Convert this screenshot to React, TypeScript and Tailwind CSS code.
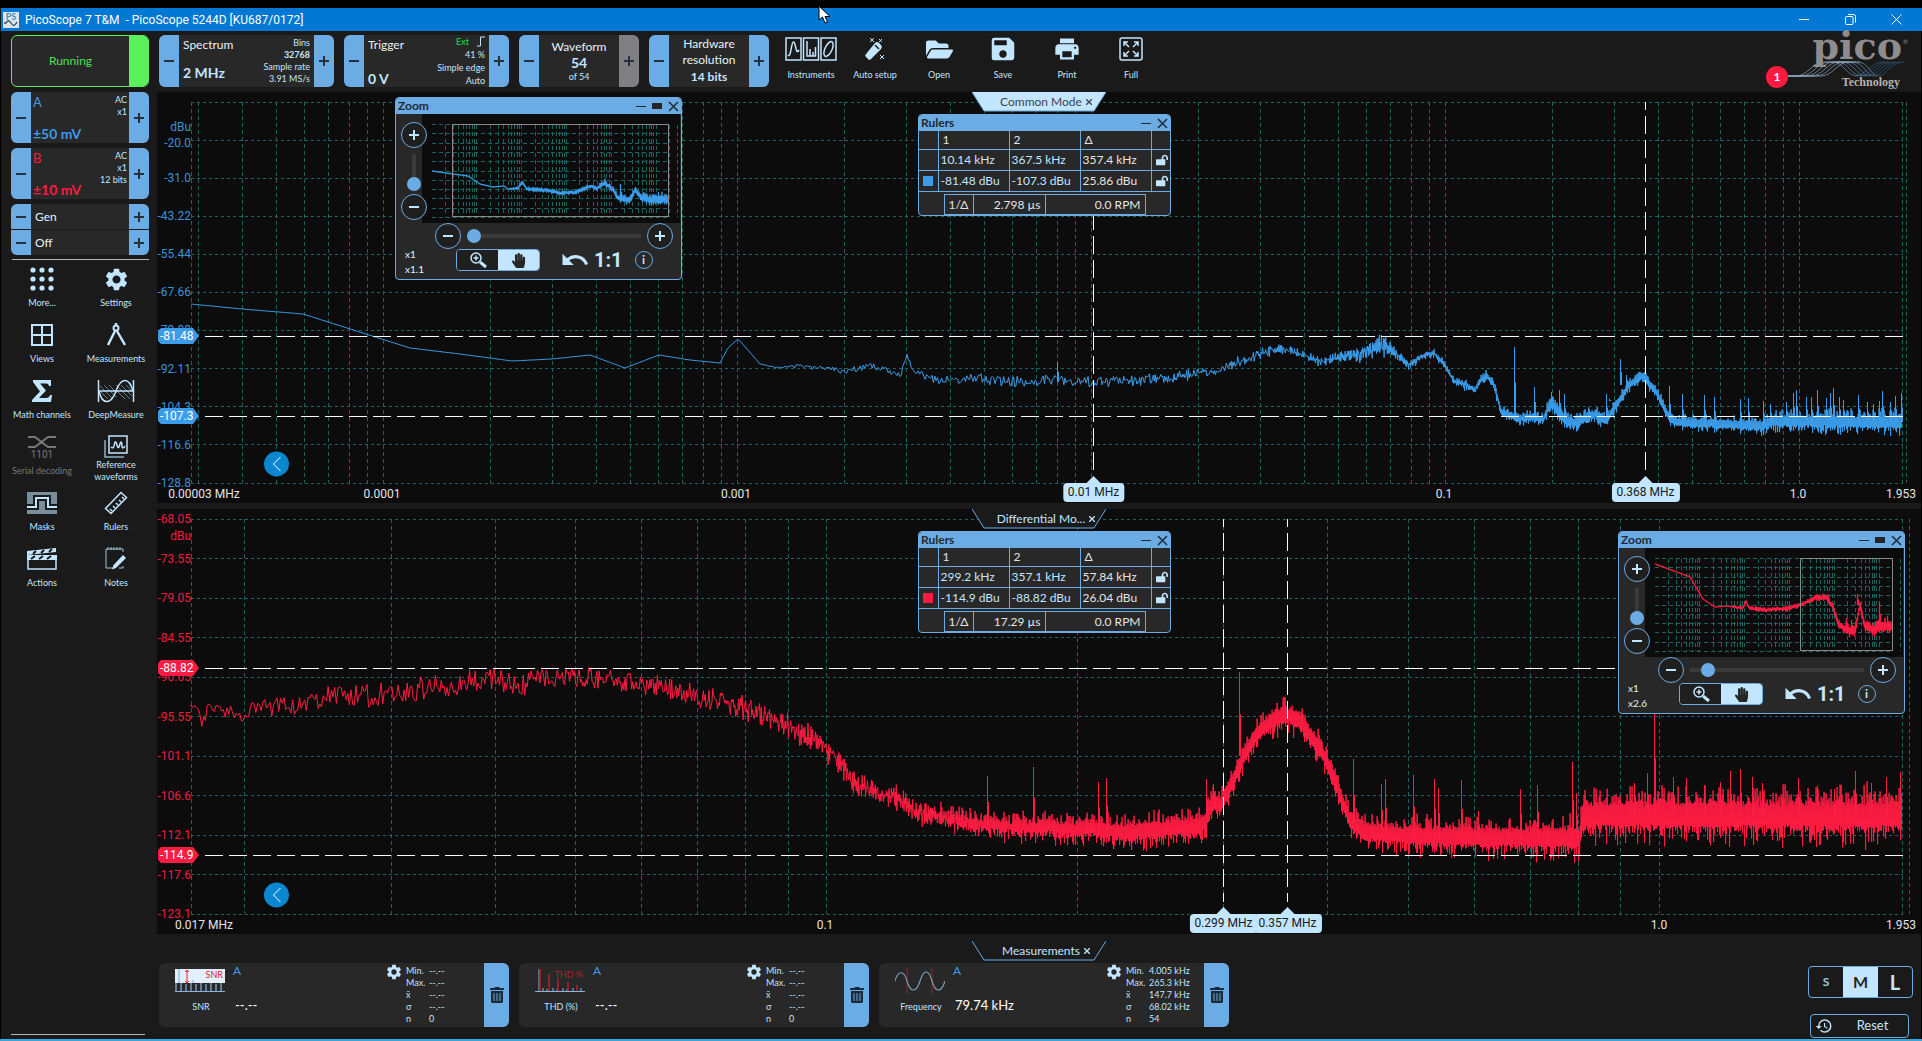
import type { ReactNode } from "react";
import { FaFolderOpen, FaHandPaper, FaLockOpen, FaTrashAlt } from "react-icons/fa";
import { MdHistory, MdPrint, MdSave, MdSettings, MdUndo } from "react-icons/md";

type Point = [number, number, number];
type Spike = [number, number];
type Label = { text: string; at: number };

const LOGS = [1, 2, 3, 4, 5, 6, 7, 8, 9].map((n) => Math.log10(n));

// small seeded generator so that the noise floor is the same on each render
const makeRandom = (seed: number) => () => {
  seed = (seed * 1664525 + 1013904223) % 4294967296;
  return seed / 4294967296;
};

// x, centre y, noise amplitude
const commonTrace: Point[] = [
  [191, 304, 0], [242, 309, 0], [303, 314, 0], [410, 348, 0], [460, 354, 0], [512, 361, 0], [552, 359, 0],
  [590, 355, 0], [625, 368, 0], [659, 355, 0], [690, 360, 0], [720, 363, 0], [728, 348, 0], [738, 339, 0], [748, 350, 0],
  [760, 364, 0], [778, 368, 1], [800, 366, 2], [846, 371, 3], [870, 366, 3], [901, 374, 3], [907, 356, 2],
  [913, 371, 3], [938, 381, 4], [975, 378, 5], [1010, 382, 6], [1050, 380, 5], [1091, 382, 6], [1131, 381, 6],
  [1163, 378, 6], [1189, 375, 6], [1220, 370, 6], [1241, 361, 6], [1262, 353, 6], [1281, 349, 6],
  [1299, 352, 6], [1320, 362, 6], [1338, 357, 7], [1362, 354, 8], [1375, 347, 13], [1386, 345, 14], [1396, 354, 7],
  [1409, 365, 6], [1420, 357, 5], [1433, 353, 5], [1443, 363, 5], [1454, 381, 5], [1464, 384, 6],
  [1475, 390, 5], [1481, 380, 6], [1486, 376, 7], [1493, 382, 6], [1501, 412, 7], [1517, 418, 8], [1535, 417, 9],
  [1543, 420, 7], [1551, 402, 11], [1561, 416, 9], [1574, 423, 9], [1595, 414, 9], [1606, 421, 8],
  [1619, 401, 7], [1629, 385, 8], [1642, 376, 7], [1655, 390, 7], [1668, 415, 8], [1677, 422, 8],
  [1745, 425, 9], [1763, 426, 10], [1771, 421, 11], [1902, 422, 13],
];

const commonSpikes: Spike[] = [
  [1057, 362], [1514, 347], [1534, 387], [1551, 392], [1559, 390], [1564, 394], [1588, 407], [1606, 394], [1609, 399],
  [1620, 359], [1626, 375], [1669, 386], [1682, 394], [1704, 395], [1714, 397], [1740, 399], [1748, 398],
  [1763, 401], [1770, 404], [1786, 402], [1793, 393], [1796, 390], [1806, 397], [1811, 397], [1817, 390], [1826, 398],
  [1830, 393], [1833, 388], [1839, 397], [1843, 400], [1858, 395], [1867, 402], [1873, 404], [1879, 401], [1882, 391],
  [1890, 402], [1895, 396], [1901, 393],
];

const diffTrace: Point[] = [
  [191, 707, 4], [201, 718, 10], [208, 709, 8], [224, 714, 8], [244, 711, 10], [265, 708, 10], [293, 706, 9], [322, 698, 11],
  [351, 696, 12], [380, 694, 13], [408, 691, 12], [437, 686, 11], [465, 683, 12], [483, 678, 11], [523, 683, 13],
  [552, 681, 12], [580, 677, 11], [609, 680, 12], [638, 683, 12], [666, 688, 13], [695, 696, 13], [724, 701, 14],
  [747, 710, 14], [770, 717, 14], [793, 730, 15], [816, 740, 15], [827, 751, 14], [841, 764, 14], [850, 780, 14],
  [867, 790, 14], [896, 796, 14], [913, 810, 15], [942, 818, 16], [976, 822, 17], [1011, 828, 18],
  [1050, 828, 18], [1059, 831, 17], [1090, 828, 17], [1123, 833, 18], [1147, 830, 18], [1194, 827, 17], [1206, 821, 17],
  [1213, 802, 17], [1220, 806, 16], [1232, 783, 16], [1244, 756, 15], [1255, 737, 16], [1270, 722, 17], [1285, 714, 18],
  [1300, 721, 17], [1311, 737, 16], [1323, 754, 16], [1335, 780, 15], [1341, 798, 14], [1350, 820, 16],
  [1364, 831, 18], [1411, 836, 20], [1500, 838, 20], [1580, 838, 21], [1583, 815, 27], [1902, 816, 30],
];

const diffSpikes: Spike[] = [
  [987, 776], [1033, 767], [1098, 782], [1106, 778], [1206, 779], [1213, 784], [1239, 672], [1353, 759], [1381, 784],
  [1385, 779], [1413, 775], [1434, 779], [1438, 788], [1461, 780], [1478, 811], [1520, 789], [1537, 785], [1572, 762],
  [1576, 793], [1634, 783], [1647, 773], [1654, 700], [1673, 777], [1686, 778], [1704, 785], [1720, 782], [1730, 771],
  [1740, 769], [1752, 777], [1762, 783], [1798, 778], [1817, 786], [1834, 789], [1855, 771], [1871, 783], [1886, 777],
  [1900, 772],
];

const miniCommon: Point[] = [
  [10, 57, 0], [31, 60, 0], [46, 62, 0], [58, 70, 0], [71, 73, 0], [82, 72, 0], [86, 75, 0], [96, 74, 1], [100, 68, 1],
  [105, 75, 1], [121, 76, 2], [138, 79, 2], [155, 78, 2], [168, 72, 2], [175, 74, 3], [183, 69, 4], [191, 76, 4],
  [196, 84, 4], [208, 86, 5], [213, 76, 4], [220, 84, 6], [230, 86, 6], [246, 85, 8],
];

const miniDiff: Point[] = [
  [10, 16, 0], [32, 24, 0], [45, 29, 0], [58, 51, 0], [70, 59, 0], [82, 58, 0], [98, 60, 1], [101, 53, 1], [104, 60, 1],
  [122, 62, 2], [145, 60, 3], [158, 56, 3], [172, 49, 4], [182, 50, 4], [188, 59, 5], [193, 76, 5], [202, 82, 6],
  [210, 83, 7], [215, 57, 6], [220, 79, 6], [230, 82, 8], [234, 78, 8], [247, 79, 9],
];

const clamp = (n: number) => Math.min(1, Math.max(0, n));

function buildTrace(points: Point[], spikes: Spike[], seed: number, dense: number) {
  const random = makeRandom(seed);
  const [first] = points;
  const last = points[points.length - 1];
  const out = [`M${first[0]} ${first[1]}`];
  let index = 0;
  let side = 1;
  let x = first[0];
  while (x < last[0]) {
    while (index < points.length - 2 && x >= points[index + 1][0]) index++;
    const [x0, y0, a0] = points[index];
    const [x1, y1, a1] = points[index + 1];
    const t = (x - x0) / (x1 - x0);
    const amp = a0 + (a1 - a0) * t;
    const mid = y0 + (y1 - y0) * t;
    const packed = clamp((x - dense) / 600);
    side = -side;
    const jag = random();
    const spread = side * (0.3 + 0.2 * random() + 0.7 * jag * jag * jag);
    const noise = (1 - packed) * (random() * 2 - 1) + packed * spread;
    out.push(`L${x.toFixed(1)} ${(mid + noise * amp).toFixed(1)}`);
    x += 1.8 - 1.3 * clamp((x - dense + 300) / 700);
  }
  spikes.forEach(([sx, sy]) => {
    const next = points[points.findIndex((point) => point[0] >= sx)] ?? last;
    out.push(`M${sx + 0.5} ${sy}V${next[1]}M${sx + 1.5} ${(sy + next[1]) / 2}V${next[1]}`);
  });
  return out.join("");
}

function gridPath(start: number, decade: number, left: number, right: number, top: number, bottom: number) {
  let d = "";
  for (let base = start - decade; base < right; base += decade) {
    LOGS.forEach((log) => {
      const x = Math.floor(base + log * decade) + 0.5;
      if (x > left + 2 && x < right) d += `M${x} ${top}V${bottom}`;
    });
  }
  return d;
}

const Stepper = ({ sign, muted }: { sign: "+" | "−"; muted?: boolean }) => (
  <button
    aria-label={sign === "+" ? "Increase" : "Decrease"}
    className={`flex w-5 shrink-0 items-center justify-center self-stretch ${muted ? "bg-[#808084]" : "bg-[#6bace4]"}`}
  >
    <svg width="12" height="12" viewBox="0 0 12 12" stroke="#24303c" strokeWidth="2">
      <path d={sign === "+" ? "M1 6H11M6 1V11" : "M1 6H11"} />
    </svg>
  </button>
);

const Control = ({ width, muted, children }: { width: string; muted?: boolean; children: ReactNode }) => (
  <div className={`flex h-[52px] overflow-hidden rounded-md bg-[#282828] ${width}`}>
    <Stepper sign="−" />
    <div className="min-w-0 flex-1">{children}</div>
    <Stepper sign="+" muted={muted} />
  </div>
);

const ToolButton = ({ label, icon }: { label: string; icon: ReactNode }) => (
  <button className="flex w-16 flex-col items-center text-[9px] text-[#c2e6ff]">
    <span className="flex h-6 items-center justify-center">{icon}</span>
    <span className="mt-2 h-3 leading-3 whitespace-nowrap">{label}</span>
  </button>
);

const SideButton = ({ label, icon, disabled }: { label: string; icon: ReactNode; disabled?: boolean }) => (
  <button
    disabled={disabled}
    className={`flex h-14 flex-col items-center text-[9px] ${disabled ? "text-[#77777a]" : "text-[#c2e6ff]"}`}
  >
    <span className="flex h-6 items-center justify-center">{icon}</span>
    <span className="flex h-6 w-20 items-center justify-center text-center leading-3">{label}</span>
  </button>
);

const InstrumentsIcon = () => (
  <svg width="52" height="24" viewBox="0 0 52 24" fill="none" stroke="#c2e6ff" strokeWidth="1.5">
    <path d="M1 1H16V23H1ZM18.500 1H33.500V23H18.500ZM36 1H51V23H36Z" />
    <path d="M3 18C6 22 6 5 8.500 5S10.500 19 14 13" />
    <path d="M22 4V19H31M25 19V12M28 19V15M30.500 19V10" />
    <ellipse cx="43.500" cy="12" rx="3.500" ry="8" transform="rotate(25 43.500 12)" />
  </svg>
);

const AutoSetupIcon = () => (
  <svg width="24" height="24" viewBox="0 0 24 24">
    <path d="M3 17 12 6a3 3 0 0 1 4 0l2 2a3 3 0 0 1 0 4L8 22a2 2 0 0 1-3 0l-2-2a2 2 0 0 1 0-3Z" fill="#c2e6ff" />
    <path d="M12 8 16 12" stroke="#1a1a1a" strokeWidth="1.5" />
    <path d="M7 1 11 5M11 1 7 5M17 18 21 22M21 18 17 22M16 2 19 5M19 2 16 5" stroke="#c2e6ff" />
  </svg>
);

const FullIcon = () => (
  <svg width="24" height="24" viewBox="0 0 24 24" fill="none" stroke="#c2e6ff" strokeWidth="1.500">
    <rect x="1" y="1" width="22" height="22" rx="2" />
    <path d="M5 9V5H9M5 5 10 10M15 5H19V9M19 5 14 10M5 15V19H9M5 19 10 14M19 15V19H15M19 19 14 14" />
  </svg>
);

const MoreIcon = () => (
  <svg width="24" height="24" viewBox="0 0 24 24" fill="#c2e6ff">
    {[3, 12, 21].map((y) => [3, 12, 21].map((x) => <circle key={`${x}-${y}`} cx={x} cy={y} r="2.600" />))}
  </svg>
);

const ViewsIcon = () => (
  <svg width="24" height="24" viewBox="0 0 24 24" fill="none" stroke="#c2e6ff" strokeWidth="2">
    <path d="M2 2H22V22H2ZM12 2V22M2 12H22" />
  </svg>
);

const MeasureIcon = () => (
  <svg width="24" height="24" viewBox="0 0 24 24" fill="none" stroke="#c2e6ff" strokeWidth="2">
    <circle cx="12" cy="5" r="2.500" />
    <path d="M12 0V2M11 8 4 22M13 8 21 22" strokeWidth="2.500" />
  </svg>
);

const MathIcon = () => (
  <svg width="24" height="24" viewBox="0 0 24 24" fill="#c2e6ff">
    <path d="M3 1H21V7H19C18.500 5 17.500 4.500 15 4.500H10L16 11.500 9 19H16C18.500 19 19.500 18 20 16H22L21 23H2V21L10 12.500 3 3Z" />
  </svg>
);

const DeepMeasureIcon = () => (
  <svg width="38" height="24" viewBox="0 0 38 24" fill="none" stroke="#c2e6ff">
    <path d="M3 7 16 20M3 12 11 20M7 6 19 18M12 6 20 14M19 6 33 20M24 6 35 17M29 6 35 12M20 12 28 20" stroke="#8296a3" strokeWidth=".8" />
    <path d="M1.500 1V23M36.500 1V23M1 12H37" strokeWidth="1.500" />
    <path d="M2 12C5 26 14 26 19 12S32-2 36 12" strokeWidth="1.500" />
  </svg>
);

const SerialIcon = () => (
  <svg width="30" height="26" viewBox="0 0 30 26" fill="none">
    <path d="M1 3H8L21 13H29M1 13H8L21 3H29" stroke="#77777a" strokeWidth="2" />
    <text x="15" y="24" fill="#77777a" fontSize="10" fontFamily="Roboto, sans-serif" textAnchor="middle">1101</text>
  </svg>
);

const ReferenceIcon = () => (
  <svg width="24" height="24" viewBox="0 0 24 24" fill="none" stroke="#c2e6ff" strokeWidth="1.500">
    <path d="M5 1H23V18H5Z" />
    <path d="M1 5V22H20" stroke="#8fb0c6" />
    <path d="M7 12C9 14 10 12 10.500 9S12 6 13 10 15 13 16 9 18 8 18 11 20 13 21 11" />
  </svg>
);

const MasksIcon = () => (
  <svg width="30" height="22" viewBox="0 0 30 22">
    <rect width="30" height="22" fill="#7a8d9a" />
    <path d="M0 15H9V6H21V15H30" fill="none" stroke="#1a1a1a" strokeWidth="6" />
    <path d="M0 15H9V6H21V15H30" fill="none" stroke="#c2e6ff" strokeWidth="2" />
  </svg>
);

const RulersIcon = () => (
  <svg width="24" height="24" viewBox="0 0 24 24" fill="none" stroke="#c2e6ff" strokeWidth="1.500">
    <path d="M17 1.500 22.500 6.500 7 22.500 1.500 17.500Z" />
    <path d="M8 20 6 18M11 17 9 15M14 14 12 12M17 11 15 9M20 8 18 6" />
  </svg>
);

const ActionsIcon = () => (
  <svg width="30" height="24" viewBox="0 0 30 24">
    <path d="M1 9V22H29V9" fill="none" stroke="#c2e6ff" strokeWidth="1.500" />
    <path d="M0 4 29 1V5L0 8ZM0 8H30V13H0Z" fill="#c2e6ff" />
    <path d="M6 7 9 4M14 6 17 3M22 5 25 2M4 12 8 9M12 12 16 9M20 12 24 9" stroke="#1a1a1a" strokeWidth="2" />
  </svg>
);

const NotesIcon = () => (
  <svg width="24" height="24" viewBox="0 0 24 24" fill="none" stroke="#9fc3da">
    <path d="M19 5V2H2V21H9M19 19V21H15" />
    <path d="M4 0V3M7 0V3M10 0V3M13 0V3M16 0V3" />
    <path d="M19 8 22 11 12 21 8 22.500 9.500 18Z" fill="#c2e6ff" stroke="none" />
  </svg>
);

const Channel = ({ name, range, notes, color }: { name: string; range: string; notes: string[]; color: string }) => (
  <div className="mt-[5px] flex h-[51px] overflow-hidden rounded-md bg-[#282828]">
    <Stepper sign="−" />
    <div className={`flex flex-1 flex-col justify-between pt-0.5 pl-0.5 ${color}`}>
      <span className="text-[13px] leading-4">{name}</span>
      <span className="text-[14px] leading-[18px] font-bold whitespace-nowrap">{range}</span>
    </div>
    <div className="-ml-6 flex flex-col pt-0.5 pr-0.5 text-right text-[9px] leading-3 whitespace-nowrap text-[#c2e6ff]">
      {notes.map((note) => (
        <span key={note}>{note}</span>
      ))}
    </div>
    <Stepper sign="+" />
  </div>
);

const ToolSide = () => (
  <aside className="flex w-[157px] shrink-0 flex-col border-l border-black pt-1 pr-2 pb-1 pl-[10px]">
    <button className="flex h-[52px] shrink-0 overflow-hidden rounded-md border border-[#5bf05b] bg-[#282828]">
      <span className="flex-1 self-center text-[12px] text-[#4fe04f]">Running</span>
      <span className="w-[19px] self-stretch bg-[#5bf05b]" />
    </button>
    <Channel name="A" range="±50 mV" notes={["AC", "x1"]} color="text-[#3b9aea]" />
    <Channel name="B" range="±10 mV" notes={["AC", "x1", "12 bits"]} color="text-[#ff1a40]" />
    <div className="mt-[5px] flex flex-col gap-px overflow-hidden rounded-md">
      {["Gen", "Off"].map((text) => (
        <div key={text} className="flex h-[25px] items-center bg-[#282828]">
          <Stepper sign="−" />
          <span className="flex-1 pl-1 text-[12px] text-[#e4f2fc]">{text}</span>
          <Stepper sign="+" />
        </div>
      ))}
    </div>
    <hr className="mt-1 ml-px border-[#b5b5b5]" />
    <nav className="-mx-1 mt-[7px] -ml-[6px] grid grid-cols-2">
      <SideButton label="More..." icon={<MoreIcon />} />
      <SideButton label="Settings" icon={<MdSettings size={27} />} />
      <SideButton label="Views" icon={<ViewsIcon />} />
      <SideButton label="Measurements" icon={<MeasureIcon />} />
      <SideButton label="Math channels" icon={<MathIcon />} />
      <SideButton label="DeepMeasure" icon={<DeepMeasureIcon />} />
      <SideButton label="Serial decoding" icon={<SerialIcon />} disabled />
      <SideButton label="Reference waveforms" icon={<ReferenceIcon />} />
      <SideButton label="Masks" icon={<MasksIcon />} />
      <SideButton label="Rulers" icon={<RulersIcon />} />
      <SideButton label="Actions" icon={<ActionsIcon />} />
      <SideButton label="Notes" icon={<NotesIcon />} />
    </nav>
    <hr className="mt-auto mr-1 border-[#b5b5b5]" />
  </aside>
);

const Toolbar = () => (
  <header className="flex h-[61px] shrink-0 items-start pt-1 pl-0.5 text-[#e4f2fc]">
    <div className="flex gap-[10px]">
      <Control width="w-[175px]">
        <div className="flex h-full justify-between px-1">
          <div className="flex flex-col justify-between py-1">
            <span className="text-[12px] leading-3">Spectrum</span>
            <span className="text-[14px] leading-5 font-bold text-[#c2e6ff]">2 MHz</span>
          </div>
          <div className="flex flex-col pt-0.5 text-right text-[9px] leading-3 text-[#c2e6ff]">
            <span>Bins</span>
            <span className="font-bold">32768</span>
            <span>Sample rate</span>
            <span>3.91 MS/s</span>
          </div>
        </div>
      </Control>
      <Control width="w-[165px]">
        <div className="flex h-full justify-between px-1">
          <div className="flex flex-col justify-between pt-0.5">
            <span className="text-[12px] leading-4">Trigger</span>
            <span className="text-[14px] leading-4 font-bold text-[#c2e6ff]">0 V</span>
          </div>
          <div className="flex flex-col text-right text-[9px] leading-[13px] text-[#c2e6ff]">
            <span className="flex items-center justify-end gap-2 text-[#14e050]">
              Ext
              <svg width="8" height="11" viewBox="0 0 8 11" fill="none" stroke="#c2e6ff">
                <path d="M0 10H3.500V1H8" />
              </svg>
            </span>
            <span>41 %</span>
            <span>Simple edge</span>
            <span>Auto</span>
          </div>
        </div>
      </Control>
      <Control width="w-[120px]" muted>
        <div className="flex h-full flex-col items-center justify-between py-1">
          <span className="text-[12px] leading-4">Waveform</span>
          <span className="text-[14px] leading-4 font-bold text-[#c2e6ff]">54</span>
          <span className="text-[9px] leading-3 text-[#c2e6ff]">of 54</span>
        </div>
      </Control>
      <Control width="w-[120px]">
        <div className="flex h-full flex-col items-center pt-px text-center">
          <span className="text-[12px] leading-4">Hardware resolution</span>
          <span className="text-[12px] leading-[18px] font-bold text-[#c2e6ff]">14 bits</span>
        </div>
      </Control>
    </div>
    <div className="ml-[10px] flex pt-0.5">
      <ToolButton label="Instruments" icon={<InstrumentsIcon />} />
      <ToolButton label="Auto setup" icon={<AutoSetupIcon />} />
      <ToolButton label="Open" icon={<FaFolderOpen size={27} />} />
      <ToolButton label="Save" icon={<MdSave size={30} />} />
      <ToolButton label="Print" icon={<MdPrint size={28} />} />
      <ToolButton label="Full" icon={<FullIcon />} />
    </div>
    <div className="relative mr-[11px] ml-auto h-[53px] w-[144px] text-[#8f8c8e]">
      <svg className="absolute top-0 left-0" width="144" height="53" viewBox="0 0 144 53" fill="none">
        {[0, 1, 2, 3, 4, 5].map((i) => (
          <g key={i}>
            <path d={`M22 41H${30 + i * 5}C${42 + i * 5} 41 ${46 + i * 5} 27 ${58 + i * 5} 27H${74 + i * 4}`} stroke="#8fa5c0" strokeWidth=".7" />
            <path d={`M${66 + i * 5} 27C${78 + i * 5} 27 ${80 + i * 5} 41 ${92 + i * 4} 41`} stroke="#6f8fb4" strokeWidth=".7" />
            <path d={`M${88 + i * 5} 41C${100 + i * 4} 41 ${104 + i * 4} 27 ${118 + i * 4} 27`} stroke="#2b4e6c" strokeWidth=".8" />
          </g>
        ))}
      </svg>
      <span className="absolute -top-2 right-2 font-['DejaVu_Serif',serif] text-[38px] leading-[38px] font-bold">pico</span>
      <span className="absolute top-1 right-0.5 text-[6px] leading-[6px]">®</span>
      <span className="absolute right-2.5 -bottom-px font-['Liberation_Serif',serif] text-[12px] leading-[14px] font-bold text-[#b4b2b4]">
        Technology
      </span>
      <span className="absolute bottom-0 left-0 flex size-[22px] items-center justify-center rounded-full bg-[#ff1a40] text-[12px] font-bold text-white">
        1
      </span>
    </div>
  </header>
);

const Tab = ({ label, active }: { label: string; active?: boolean }) => (
  <div className="relative flex h-5 w-[134px] items-center justify-center">
    <svg className="absolute inset-0" width="134" height="20" viewBox="0 0 134 20">
      <path d="M0 0 12 19H122L134 0" fill={active ? "#c2e6ff" : "#1a1a1a"} stroke="#6bace4" />
    </svg>
    <span
      className={`relative flex items-center gap-0.5 pl-4 text-[12px] leading-4 whitespace-nowrap ${active ? "text-[#3a4450]" : "text-[#c2e6ff]"}`}
    >
      {label}
      <button aria-label={`Close ${label}`} className="p-0.5">
        <svg width="6" height="6" viewBox="0 0 6 6" stroke="currentColor" strokeWidth="1.300">
          <path d="M0 0 6 6M6 0 0 6" />
        </svg>
      </button>
    </span>
  </div>
);

const WindowBar = ({ title, max }: { title: string; max?: boolean }) => (
  <div className="flex h-4 items-center bg-[#6bace4] pr-0.5 pl-0.5 text-[#1f2a35]">
    <span className="mr-auto text-[12px] leading-4 font-bold">{title}</span>
    <button aria-label="Minimize" className="px-1.5">
      <svg width="10" height="10" viewBox="0 0 10 10" stroke="currentColor">
        <path d="M0 5.500H10" />
      </svg>
    </button>
    {max && <button aria-label="Maximize" className="mr-1.5 h-1.5 w-2.5 bg-[#262626]" />}
    <button aria-label="Close">
      <svg width="11" height="11" viewBox="0 0 11 11" stroke="currentColor" strokeWidth="1.500">
        <path d="M1 1 10 10M10 1 1 10" />
      </svg>
    </button>
  </div>
);

const RoundButton = ({ sign }: { sign: "+" | "−" }) => (
  <button
    aria-label={sign === "+" ? "Zoom in" : "Zoom out"}
    className="flex size-[26px] shrink-0 items-center justify-center rounded-full border border-[#6bace4] bg-[#1f1f1f]"
  >
    <svg width="10" height="10" viewBox="0 0 10 10" stroke="#c2e6ff" strokeWidth="2">
      <path d={sign === "+" ? "M0 5H10M5 0V10" : "M0 5H10"} />
    </svg>
  </button>
);

type ZoomProps = { trace: Point[]; color: string; spikes: Spike[]; from: number; to: number; value: number; factor: string };

const ZoomWindow = ({ trace, color, spikes, from, to, value, factor }: ZoomProps) => (
  <section className="h-[183px] w-[287px] overflow-hidden rounded border border-[#6bace4] bg-[#282828]">
    <WindowBar title="Zoom" max />
    <div className="flex">
      <div className="z-10 flex w-9 shrink-0 flex-col items-center pt-2">
        <RoundButton sign="+" />
        <input
          type="range"
          aria-label="Vertical zoom"
          defaultValue={0}
          className="mt-1.5 mb-[3px] h-[37px] w-3.5 appearance-none bg-transparent [direction:rtl] [writing-mode:vertical-lr] [&::-webkit-slider-runnable-track]:w-1 [&::-webkit-slider-runnable-track]:bg-[#3a3a3a] [&::-webkit-slider-thumb]:-ml-[5px] [&::-webkit-slider-thumb]:size-3.5 [&::-webkit-slider-thumb]:appearance-none [&::-webkit-slider-thumb]:rounded-full [&::-webkit-slider-thumb]:bg-[#6bace4]"
        />
        <RoundButton sign="−" />
      </div>
      <svg width="258" height="109" viewBox="0 0 258 109" fill="none" className="-ml-2.5 shrink-0 bg-[#0c0c0c]">
        <path d={gridPath(10, 44.8, 9, 257, 11, 103)} stroke="#1c6461" strokeDasharray="4 3" />
        <path
          d={[0, 1, 2, 3, 4, 5, 6, 7, 8, 9, 10].map((i) => `M10 ${Math.round(10 + i * 9.3) + 0.5}H248`).join("")}
          stroke="#1c6461"
          strokeDasharray="4 3"
        />
        <path d={buildTrace(trace, spikes, 7, -700)} stroke={color} strokeWidth="1.300" />
        <rect x={from + 0.5} y="10.500" width={to - from} height="92" stroke="#8a8a8a" />
      </svg>
    </div>
    <div className="flex h-[26px] items-center pl-[39px]">
      <RoundButton sign="−" />
      <input
        type="range"
        aria-label="Horizontal zoom"
        defaultValue={value}
        className="mx-1.5 h-3.5 w-[174px] appearance-none bg-transparent [&::-webkit-slider-runnable-track]:h-1 [&::-webkit-slider-runnable-track]:bg-[#3a3a3a] [&::-webkit-slider-thumb]:-mt-[5px] [&::-webkit-slider-thumb]:size-3.5 [&::-webkit-slider-thumb]:appearance-none [&::-webkit-slider-thumb]:rounded-full [&::-webkit-slider-thumb]:bg-[#6bace4]"
      />
      <RoundButton sign="+" />
    </div>
    <div className="flex items-start pl-[9px] text-[#c2e6ff]">
      <div className="-mt-0.5 w-[51px] text-[10px] leading-[15px] text-[#e4f2fc]">
        <div>x1</div>
        <div>{factor}</div>
      </div>
      <div className="flex h-[22px] w-[84px] overflow-hidden rounded border border-[#6bace4]">
        <button aria-label="Zoom tool" className="flex flex-1 items-center justify-center bg-[#1f1f1f]">
          <svg width="18" height="18" viewBox="0 0 18 18" fill="none" stroke="#c2e6ff" strokeWidth="1.500">
            <circle cx="7" cy="7" r="5" />
            <path d="M4.500 7H9.500M7 4.500V9.500" />
            <path d="M11 11 17 16" strokeWidth="3" />
          </svg>
        </button>
        <button aria-label="Hand tool" className="flex flex-1 items-center justify-center bg-[#c2e6ff] text-[#262626]">
          <FaHandPaper size={15} />
        </button>
      </div>
      <button aria-label="Undo zoom" className="ml-5 flex h-[22px] items-center">
        <MdUndo size={30} />
      </button>
      <button className="ml-1 h-[22px] text-[20px] leading-[22px] font-bold font-[family-name:Roboto]">1:1</button>
      <button
        aria-label="Zoom information"
        className="mt-0.5 ml-3 flex size-[18px] items-center justify-center rounded-full border border-[#6bace4] text-[12px] leading-3 font-bold"
      >
        i
      </button>
    </div>
  </section>
);

type RulerProps = { rows: string[][]; swatch: string; period: string };

const RulersWindow = ({ rows, swatch, period }: RulerProps) => (
  <section className="h-[102px] w-[253px] overflow-hidden rounded border border-[#6bace4] bg-[#282828] text-[12px] text-[#e4e4e4]">
    <WindowBar title="Rulers" />
    <table className="w-full table-fixed border-collapse text-left leading-4 [&_td]:border-[#6bace4] [&_th]:border-[#6bace4]">
      <colgroup>
        <col className="w-[19px]" />
        <col />
        <col />
        <col />
        <col className="w-[19px]" />
      </colgroup>
      <thead>
        <tr className="h-[18px]">
          <th className="border-r border-b" />
          {["1", "2", "Δ"].map((head) => (
            <th key={head} className="border-r border-b px-1 font-normal">
              {head}
            </th>
          ))}
          <th className="border-b" />
        </tr>
      </thead>
      <tbody>
        {rows.map((row, i) => (
          <tr key={row[0]} className="h-[21px]">
            <td className="border-r border-b">
              {i === 1 && <span className={`mx-auto block size-2.5 ${swatch}`} />}
            </td>
            {row.map((cell, j) => (
              <td key={cell} className={`border-r border-b px-0.5 whitespace-nowrap ${j < 2 ? "text-[#c2e6ff]" : ""}`}>
                {cell}
              </td>
            ))}
            <td className="border-b text-[#c2e6ff]">
              <button aria-label="Unlock rulers" className="block pl-1">
                <FaLockOpen size={12} />
              </button>
            </td>
          </tr>
        ))}
      </tbody>
    </table>
    <dl className="mx-auto mt-0.5 flex h-[21px] w-[202px] items-center border border-[#6bace4] leading-[19px]">
      <dt className="w-[29px] border-r border-[#6bace4] text-center">1/Δ</dt>
      <dd className="w-[72px] border-r border-[#6bace4] pr-1 text-right">{period}</dd>
      <dd className="flex-1 pr-1 text-right">0.0 RPM</dd>
    </dl>
  </section>
);

type ChartProps = {
  name: string;
  top: number;
  height: number;
  plotTop: number;
  plotBottom: number;
  color: string;
  tone: string;
  tagTone: string;
  grid: string;
  path: string;
  unitAt: number;
  yLabels: Label[];
  xLabels: Label[];
  hRulers: Label[];
  vRulers: Label[];
  className: string;
  children: ReactNode;
};

const LEFT = 157;
const WIDTH = 1764;

const Chart = (props: ChartProps) => {
  const { top, height, plotTop, plotBottom, color, tone } = props;
  const px = (x: number) => `${((x - LEFT) / WIDTH) * 100}%`;
  const py = (y: number) => `${((y - top) / height) * 100}%`;
  const step = (plotBottom - plotTop) / 10;
  const rows = Array.from({ length: 11 }, (_, i) => `M191 ${Math.floor(plotTop + i * step) + 0.5}H1903`).join("");

  return (
    <section
      aria-label={props.name}
      className={`relative min-h-0 bg-[#0c0c0c] text-[12px] font-[family-name:Roboto] ${props.className}`}
    >
      <svg
        className="absolute inset-0 size-full"
        viewBox={`${LEFT} ${top} ${WIDTH} ${height}`}
        preserveAspectRatio="none"
        fill="none"
      >
        <path d={rows} stroke="#1c6461" strokeDasharray="3 3" />
        <path
          d={`${props.grid}M191.500 ${plotTop}V${plotBottom}M1902.500 ${plotTop}V${plotBottom}`}
          stroke="#1c6461"
          strokeDasharray="4 3"
        />
        <path d={props.path} stroke={color} />
        <g stroke="#ffffff">
          {props.hRulers.map((r) => (
            <path key={r.text} d={`M205 ${r.at + 0.5}H1903`} strokeDasharray="18 6" />
          ))}
          {props.vRulers.map((r) => (
            <path
              key={r.text}
              d={`M${r.at + 0.5} ${plotTop}V${plotBottom - 12}`}
              strokeDasharray="18 6"
              strokeDashoffset="10"
            />
          ))}
        </g>
      </svg>
      <div className={`absolute inset-y-0 left-0 w-[34px] leading-[14px] ${tone}`}>
        <span className="absolute right-0 -translate-y-1/2" style={{ top: py(props.unitAt) }}>
          dBu
        </span>
        {props.yLabels.map((label) => (
          <span key={label.text} className="absolute right-0 -translate-y-1/2" style={{ top: py(label.at) }}>
            {label.text}
          </span>
        ))}
      </div>
      {props.hRulers.map((r) => (
        <span
          key={r.text}
          className={`absolute left-px h-4 w-[41px] -translate-y-1/2 pl-0.5 leading-4 text-white [clip-path:polygon(3px_0,35px_0,100%_50%,35px_100%,3px_100%,0_80%,0_20%)] ${props.tagTone}`}
          style={{ top: py(r.at) }}
        >
          {r.text}
        </span>
      ))}
      {props.xLabels.map((label) => (
        <span
          key={label.text}
          className="absolute bottom-0.5 -translate-x-1/2 leading-[14px] whitespace-nowrap text-[#e4e4e4]"
          style={{ left: px(label.at) }}
        >
          {label.text}
        </span>
      ))}
      {props.vRulers.map((r) => (
        <span
          key={r.text}
          className="absolute bottom-px flex -translate-x-1/2 flex-col items-center"
          style={{ left: px(r.at + 0.5) }}
        >
          <span className="h-[7px] w-3.5 bg-[#c2e6ff] [clip-path:polygon(50%_0,100%_100%,0_100%)]" />
          <span className="h-[19px] rounded bg-[#c2e6ff] px-[5px] leading-[19px] whitespace-nowrap text-[#1a1a1a]">{r.text}</span>
        </span>
      ))}
      <button
        aria-label="Previous waveform"
        className="absolute left-[107px] flex size-[25px] -translate-y-1/2 items-center justify-center rounded-full bg-[#0b86d0]"
        style={{ top: py(plotBottom - 19) }}
      >
        <svg width="8" height="15" viewBox="0 0 8 15" fill="none" stroke="#fff">
          <path d="M7.500 .5 .5 7.500 7.500 14.500" />
        </svg>
      </button>
      <div className="font-[family-name:Lato]">{props.children}</div>
    </section>
  );
};

const SnrIcon = () => (
  <svg width="50" height="24" viewBox="0 0 50 24">
    <rect width="50" height="14" fill="#e3effa" />
    <path
      d="M1 14V22M6 14V22M11 15V22M16 14V22M21 15V22M26 14V22M31 15V22M36 14V22M41 15V22M46 14V22M0 22.500H50M4 0V14M18 11V14"
      stroke="#8ab6dc"
      strokeWidth="1.200"
    />
    <path d="M12 1V14M10 3 12 1 14 3M10 12 12 14 14 12" stroke="#e02030" fill="none" />
    <text x="48" y="9" textAnchor="end" fontSize="9" fill="#e02030" fontFamily="Lato, sans-serif">SNR</text>
  </svg>
);

const ThdIcon = () => (
  <svg width="50" height="24" viewBox="0 0 50 24" fill="none">
    <path d="M0 22.500H50M8 22V19M12 22V20M18 22V19M22 22V20M28 22V19M32 22V20M38 22V19M46 22V19" stroke="#8ab6dc" />
    <path d="M4 0V22" stroke="#8ab6dc" />
    <path d="M5 0V22M14 5V22M23 10V22M33 13V22M42 16V22" stroke="#b02030" strokeWidth="1.500" />
    <text x="48" y="9" textAnchor="end" fontSize="9" fill="#b02030" fontFamily="Lato, sans-serif">THD %</text>
  </svg>
);

const FrequencyIcon = () => (
  <svg width="50" height="26" viewBox="0 0 50 26" fill="none">
    <path d="M12 0V26M37 0V26" stroke="#8a2430" />
    <path d="M0 13C3 2 9 2 12 13S21 26 25 13 34 2 37 13 46 26 50 13" stroke="#7f9cb5" strokeWidth="1.200" />
  </svg>
);

const measurements = [
  { name: "SNR", value: "--.--", icon: <SnrIcon />, stats: ["--.--", "--.--", "--.--", "--.--", "0"] },
  { name: "THD (%)", value: "--.--", icon: <ThdIcon />, stats: ["--.--", "--.--", "--.--", "--.--", "0"] },
  {
    name: "Frequency",
    value: "79.74 kHz",
    icon: <FrequencyIcon />,
    stats: ["4.005 kHz", "265.3 kHz", "147.7 kHz", "68.02 kHz", "54"],
  },
];

const Measurements = () => (
  <section className="relative flex h-[105px] shrink-0 items-end gap-[10px] pb-3 pl-0.5 text-[#c2e6ff]">
    <div className="absolute top-[7px] left-[815px]">
      <Tab label="Measurements" />
    </div>
    {measurements.map((item) => (
      <article key={item.name} className="flex h-16 w-[350px] overflow-hidden rounded-md bg-[#282828]">
        <div className="flex w-[74px] flex-col items-end pt-1">
          <span className="flex h-7 items-center pr-2">{item.icon}</span>
          <span className="mt-1 w-16 text-center text-[9px] leading-4">{item.name}</span>
        </div>
        <div className="flex flex-1 flex-col">
          <span className="text-[12px] leading-4 text-[#3b9aea]">A</span>
          <span className="mt-4 pl-0.5 text-[13px] leading-5 text-white">{item.value}</span>
        </div>
        <button aria-label={`${item.name} settings`} className="mr-[3px] self-start">
          <MdSettings size={18} />
        </button>
        <dl className="grid w-[78px] grid-cols-[23px_1fr] content-start pt-0.5 text-[9px] leading-3 whitespace-nowrap">
          {["Min.", "Max.", "x̄", "σ", "n"].map((term, i) => (
            <div key={term} className="contents">
              <dt>{term}</dt>
              <dd>{item.stats[i]}</dd>
            </div>
          ))}
        </dl>
        <button aria-label={`Delete ${item.name}`} className="flex w-[25px] items-center justify-center bg-[#6bace4] text-[#1c2a38]">
          <FaTrashAlt size={16} />
        </button>
      </article>
    ))}
    <div className="mr-2 -mb-[11px] ml-auto flex flex-col items-end gap-4">
      <div className="flex h-8 w-[105px] overflow-hidden rounded border border-[#6bace4] font-bold">
        <button className="flex-1 text-[12px] text-[#a9c9df]">S</button>
        <button className="flex-1 bg-[#c2e6ff] text-[16px] text-[#262626]">M</button>
        <button className="flex-1 text-[20px]">L</button>
      </div>
      <button className="mr-1 flex h-6 w-[99px] items-center rounded border border-[#6bace4] pl-1 text-[13px]">
        <MdHistory size={18} />
        <span className="flex-1 pl-1">Reset</span>
      </button>
    </div>
  </section>
);

const labels = (texts: string[], start: number, step: number) => texts.map((text, i) => ({ text, at: start + i * step }));

export default function App() {
  return (
    <div className="flex h-screen min-h-[700px] flex-col overflow-hidden border-b-2 border-[#3aa5d8] bg-[#1a1a1a] font-[family-name:Lato]">
      <div className="h-2 shrink-0 bg-black" />
      <div className="ml-px flex h-[23px] shrink-0 items-center bg-[#0078d4] pl-0.5 text-white">
        <svg width="16" height="16" viewBox="0 0 16 16">
          <rect width="16" height="16" fill="#dfe6ea" />
          <text x="8" y="8" textAnchor="middle" fontSize="9" fontWeight="700" fill="#3f8fc0" fontFamily="Lato, sans-serif">PS</text>
          <path d="M1 11H3C5 8 6 8 8 11S11 15 14 10" fill="none" stroke="#2c4a60" strokeWidth="1.300" />
        </svg>
        <h1 className="ml-1.5 text-[12px] whitespace-pre font-[family-name:Roboto]">PicoScope 7 T&amp;M  - PicoScope 5244D [KU687/0172]</h1>
        <div className="mr-5 ml-auto flex gap-[35px]">
          <button aria-label="Minimize window">
            <svg width="11" height="11" viewBox="0 0 11 11" stroke="#fff"><path d="M0 5.500H10" /></svg>
          </button>
          <button aria-label="Restore window">
            <svg width="11" height="11" viewBox="0 0 11 11" fill="none" stroke="#fff">
              <rect x=".5" y="2.500" width="7.500" height="8" rx="1" />
              <path d="M3 .5H8.500Q10.500 .5 10.500 2.500V8.500" />
            </svg>
          </button>
          <button aria-label="Close window">
            <svg width="11" height="11" viewBox="0 0 11 11" stroke="#fff"><path d="M.5 .5 10.500 10.500M10.500 .5 .5 10.500" /></svg>
          </button>
        </div>
      </div>
      <svg className="absolute top-[5px] left-[818px] z-50" width="13" height="19" viewBox="0 0 13 19">
        <path d="M1 1V15L4.500 12 7 18 9.500 17 7 11.500H12Z" fill="#fff" stroke="#000" />
      </svg>

      <div className="flex min-h-0 flex-1">
        <ToolSide />
        <main className="flex min-w-0 flex-1 flex-col border-r border-black">
          <Toolbar />
          <Chart
            name="Common Mode"
            className="flex-[411]"
            top={92}
            height={411}
            plotTop={102}
            plotBottom={483}
            color="#3b9dea"
            tone="text-[#3b90d8]"
            tagTone="bg-[#3b9dea]"
            grid={gridPath(29.500, 354, 191, 1908, 102, 483)}
            path={buildTrace(commonTrace, commonSpikes, 11, 1000)}
            unitAt={127}
            yLabels={[
              { text: "-20.0", at: 143 },
              ...labels(["-31.0", "-43.22", "-55.44", "-67.66", "-79.88", "-92.11", "-104.3", "-116.6", "-128.8"], 178, 38.1),
            ]}
            xLabels={[
              { text: "0.00003 MHz", at: 204 },
              { text: "0.0001", at: 382 },
              { text: "0.001", at: 736 },
              { text: "0.1", at: 1444 },
              { text: "1.0", at: 1798 },
              { text: "1.953", at: 1901 },
            ]}
            hRulers={[{ text: "-81.48", at: 336 }, { text: "-107.3", at: 416 }]}
            vRulers={[{ text: "0.01 MHz", at: 1093 }, { text: "0.368 MHz", at: 1645 }]}
          >
            <div className="absolute top-0 left-[815px]">
              <Tab label="Common Mode" active />
            </div>
            <div className="absolute top-[5px] left-[238px]">
              <ZoomWindow
                trace={miniCommon}
                color="#3b9dea"
                spikes={[[198, 70], [213, 73], [236, 78]]}
                from={30}
                to={246}
                value={0}
                factor="x1.1"
              />
            </div>
            <div className="absolute top-[22px] left-[761px]">
              <RulersWindow
                rows={[["10.14 kHz", "367.5 kHz", "357.4 kHz"], ["-81.48 dBu", "-107.3 dBu", "25.86 dBu"]]}
                swatch="bg-[#3b9dea]"
                period="2.798 µs"
              />
            </div>
          </Chart>
          <div className="h-1.5 shrink-0" />
          <Chart
            name="Differential Mode"
            className="flex-[425]"
            top={509}
            height={425}
            plotTop={519}
            plotBottom={914}
            color="#ff1c42"
            tone="text-[#f01c40]"
            tagTone="bg-[#ff1c42]"
            grid={gridPath(-6, 832.500, 191, 1912, 519, 914)}
            path={buildTrace(diffTrace, diffSpikes, 5, 550)}
            unitAt={536}
            yLabels={labels(
              ["-68.05", "-73.55", "-79.05", "-84.55", "-90.05", "-95.55", "-101.1", "-106.6", "-112.1", "-117.6", "-123.1"],
              519,
              39.500,
            )}
            xLabels={[
              { text: "0.017 MHz", at: 204 },
              { text: "0.1", at: 825 },
              { text: "1.0", at: 1659 },
              { text: "1.953", at: 1901 },
            ]}
            hRulers={[{ text: "-88.82", at: 668 }, { text: "-114.9", at: 855 }]}
            vRulers={[{ text: "0.299 MHz", at: 1223 }, { text: "0.357 MHz", at: 1287 }]}
          >
            <div className="absolute top-0 left-[815px]">
              <Tab label="Differential Mo..." />
            </div>
            <div className="absolute top-[22px] right-4">
              <ZoomWindow
                trace={miniDiff}
                color="#ff1c42"
                spikes={[[201, 70], [206, 72], [212, 46], [234, 54], [242, 68]]}
                from={155}
                to={247}
                value={7}
                factor="x2.6"
              />
            </div>
            <div className="absolute top-[22px] left-[761px]">
              <RulersWindow
                rows={[["299.2 kHz", "357.1 kHz", "57.84 kHz"], ["-114.9 dBu", "-88.82 dBu", "26.04 dBu"]]}
                swatch="bg-[#ff1c42]"
                period="17.29 µs"
              />
            </div>
          </Chart>
          <Measurements />
        </main>
      </div>
    </div>
  );
}
